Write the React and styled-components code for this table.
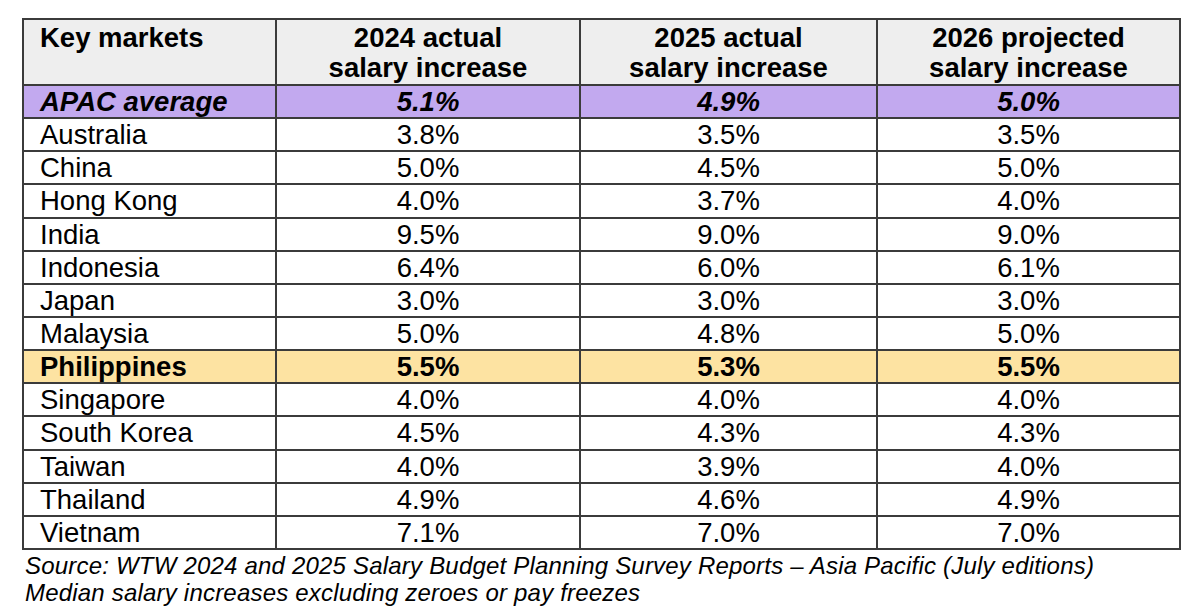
import styled, { createGlobalStyle } from 'styled-components';

const GlobalStyle = createGlobalStyle`
  html, body {
    margin: 0;
    padding: 0;
    background: #ffffff;
  }
  body {
    font-family: 'Liberation Sans', Arial, sans-serif;
    color: #000000;
  }
`;

const rows = [
  { market: 'APAC average', values: ['5.1%', '4.9%', '5.0%'], tone: 'apac' },
  { market: 'Australia', values: ['3.8%', '3.5%', '3.5%'] },
  { market: 'China', values: ['5.0%', '4.5%', '5.0%'] },
  { market: 'Hong Kong', values: ['4.0%', '3.7%', '4.0%'] },
  { market: 'India', values: ['9.5%', '9.0%', '9.0%'] },
  { market: 'Indonesia', values: ['6.4%', '6.0%', '6.1%'] },
  { market: 'Japan', values: ['3.0%', '3.0%', '3.0%'] },
  { market: 'Malaysia', values: ['5.0%', '4.8%', '5.0%'] },
  { market: 'Philippines', values: ['5.5%', '5.3%', '5.5%'], tone: 'highlight' },
  { market: 'Singapore', values: ['4.0%', '4.0%', '4.0%'] },
  { market: 'South Korea', values: ['4.5%', '4.3%', '4.3%'] },
  { market: 'Taiwan', values: ['4.0%', '3.9%', '4.0%'] },
  { market: 'Thailand', values: ['4.9%', '4.6%', '4.9%'] },
  { market: 'Vietnam', values: ['7.1%', '7.0%', '7.0%'] },
];

const headers = [
  ['2024 actual', 'salary increase'],
  ['2025 actual', 'salary increase'],
  ['2026 projected', 'salary increase'],
];

export default function App() {
  return (
    <>
      <GlobalStyle />
      <Page>
        <Table>
          <colgroup>
            <col style={{ width: 253 }} />
            <col style={{ width: 304 }} />
            <col style={{ width: 297 }} />
            <col style={{ width: 303 }} />
          </colgroup>
          <thead>
            <HeadRow>
              <HeadCell $align="left">Key markets</HeadCell>
              {headers.map((h) => (
                <HeadCell key={h[0]}>
                  {h[0]}
                  <br />
                  {h[1]}
                </HeadCell>
              ))}
            </HeadRow>
          </thead>
          <tbody>
            {rows.map((row) => (
              <Row key={row.market} $tone={row.tone}>
                <MarketCell $tone={row.tone}>{row.market}</MarketCell>
                {row.values.map((v, i) => (
                  <ValueCell key={i} $tone={row.tone}>
                    {v}
                  </ValueCell>
                ))}
              </Row>
            ))}
          </tbody>
        </Table>
        <Caption>
          Source: WTW 2024 and 2025 Salary Budget Planning Survey Reports – Asia Pacific (July editions)
          <br />
          Median salary increases excluding zeroes or pay freezes
        </Caption>
      </Page>
    </>
  );
}

const toneBg = {
  apac: '#c2a9ef',
  highlight: '#fde3a2',
};

const Page = styled.div`
  width: 1200px;
  height: 612px;
  padding: 18px 0 0 22px;
  box-sizing: border-box;
  overflow: hidden;
`;

const Table = styled.table`
  width: 1159px;
  table-layout: fixed;
  border-collapse: collapse;
  border: 2px solid #3b3b3b;
  font-size: 27.5px;
`;

const HeadRow = styled.tr`
  height: 66px;
  background: #eeeeee;
`;

const HeadCell = styled.th`
  border: 2px solid #3b3b3b;
  padding: 3px 16px 0;
  font-weight: 700;
  line-height: 30px;
  vertical-align: top;
  white-space: nowrap;
  text-align: ${(p) => p.$align || 'center'};
`;

const Row = styled.tr`
  height: 33.15px;
  background: ${(p) => toneBg[p.$tone] || '#ffffff'};
`;

const MarketCell = styled.td`
  border: 2px solid #3b3b3b;
  padding: 0 16px;
  line-height: 29px;
  white-space: nowrap;
  font-weight: ${(p) => (p.$tone ? 700 : 400)};
  font-style: ${(p) => (p.$tone === 'apac' ? 'italic' : 'normal')};
`;

const ValueCell = styled.td`
  border: 2px solid #3b3b3b;
  padding: 0;
  line-height: 29px;
  text-align: center;
  font-weight: ${(p) => (p.$tone ? 700 : 400)};
  font-style: ${(p) => (p.$tone === 'apac' ? 'italic' : 'normal')};
`;

const Caption = styled.p`
  margin: 2px 0 0 3px;
  font-size: 24px;
  letter-spacing: 0.2px;
  line-height: 27px;
  font-style: italic;
  white-space: nowrap;
`;
